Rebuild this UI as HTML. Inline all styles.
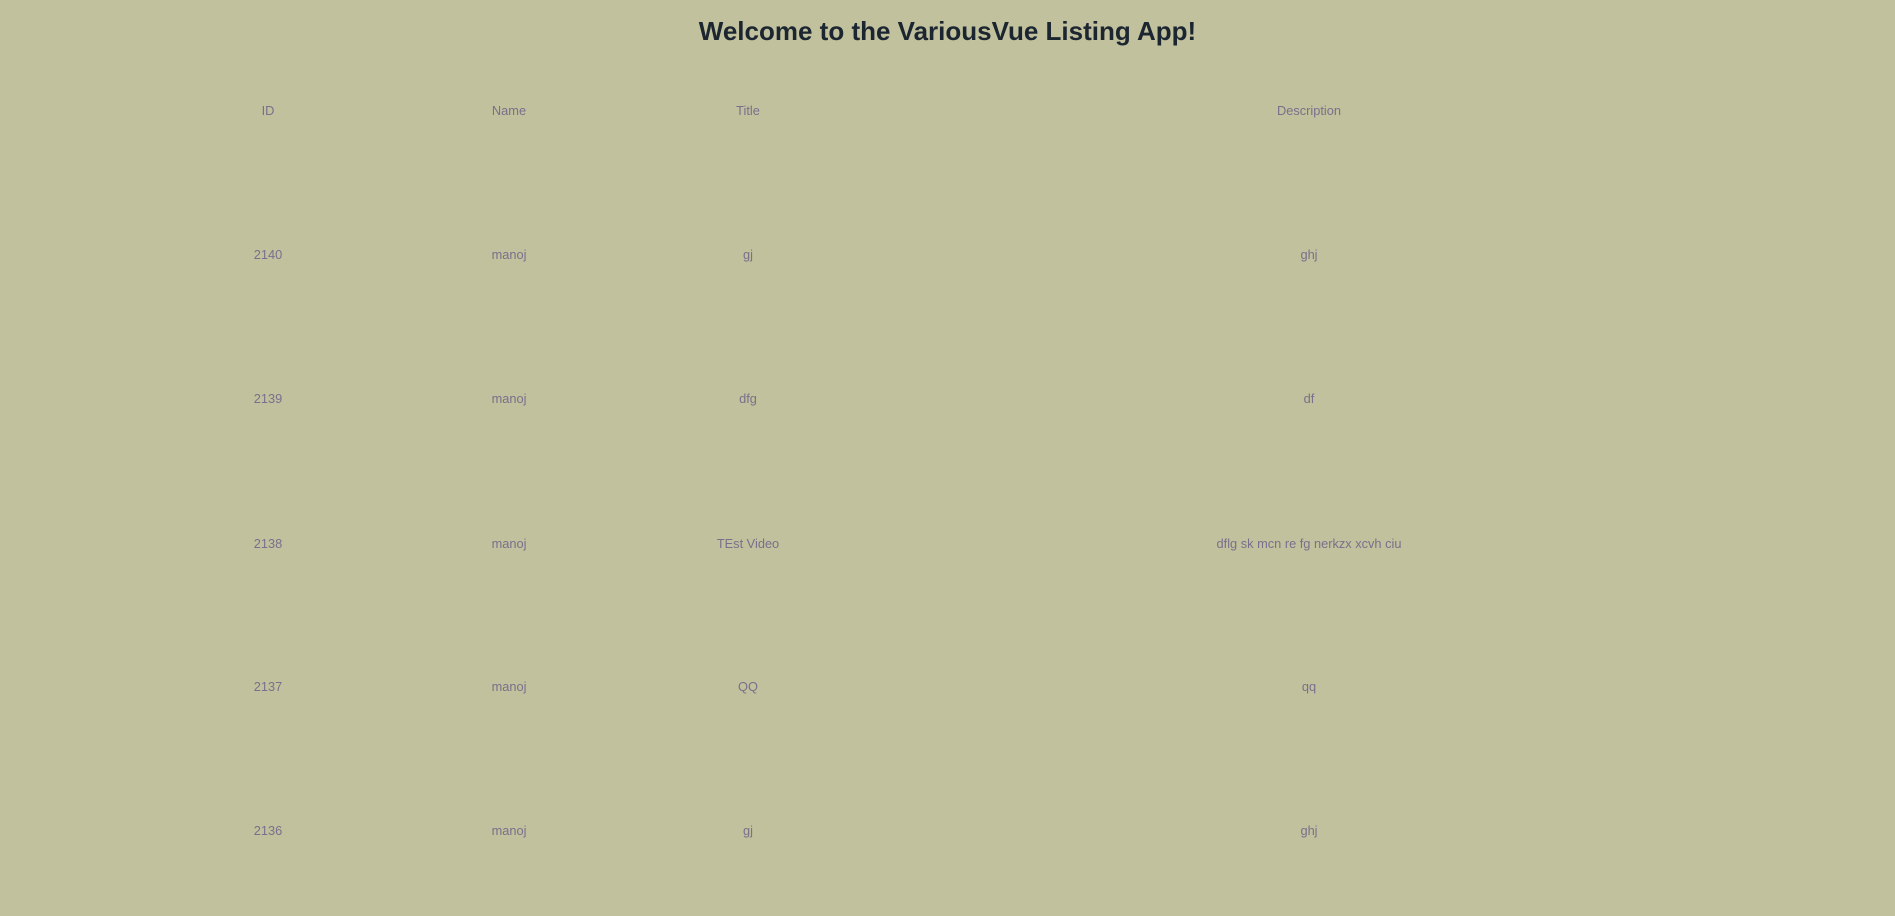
<!DOCTYPE html>
<html><head><meta charset="utf-8"><style>
html,body{margin:0;padding:0;background:#c1c19d;width:1895px;height:916px;overflow:hidden;font-family:"Liberation Sans",Arial,sans-serif}
h1{position:absolute;left:0;width:1895px;top:14px;margin:0;text-align:center;font-size:26px;font-weight:bold;color:#1c2631;line-height:34px}
.c{position:absolute;width:300px;margin-left:-150px;text-align:center;font-size:12.8px;color:#7a6f8c;line-height:16px}
</style></head><body>
<h1>Welcome to the VariousVue Listing App!</h1>
<div class="c" style="left:268px;top:103px">ID</div>
<div class="c" style="left:509px;top:103px">Name</div>
<div class="c" style="left:748px;top:103px">Title</div>
<div class="c" style="left:1309px;top:103px">Description</div>

<div class="c" style="left:268px;top:247px">2140</div>
<div class="c" style="left:509px;top:247px">manoj</div>
<div class="c" style="left:748px;top:247px">gj</div>
<div class="c" style="left:1309px;top:247px">ghj</div>

<div class="c" style="left:268px;top:391px">2139</div>
<div class="c" style="left:509px;top:391px">manoj</div>
<div class="c" style="left:748px;top:391px">dfg</div>
<div class="c" style="left:1309px;top:391px">df</div>

<div class="c" style="left:268px;top:536px">2138</div>
<div class="c" style="left:509px;top:536px">manoj</div>
<div class="c" style="left:748px;top:536px">TEst Video</div>
<div class="c" style="left:1309px;top:536px">dflg sk mcn re fg nerkzx xcvh ciu</div>

<div class="c" style="left:268px;top:679px">2137</div>
<div class="c" style="left:509px;top:679px">manoj</div>
<div class="c" style="left:748px;top:679px">QQ</div>
<div class="c" style="left:1309px;top:679px">qq</div>

<div class="c" style="left:268px;top:823px">2136</div>
<div class="c" style="left:509px;top:823px">manoj</div>
<div class="c" style="left:748px;top:823px">gj</div>
<div class="c" style="left:1309px;top:823px">ghj</div>
</body></html>
